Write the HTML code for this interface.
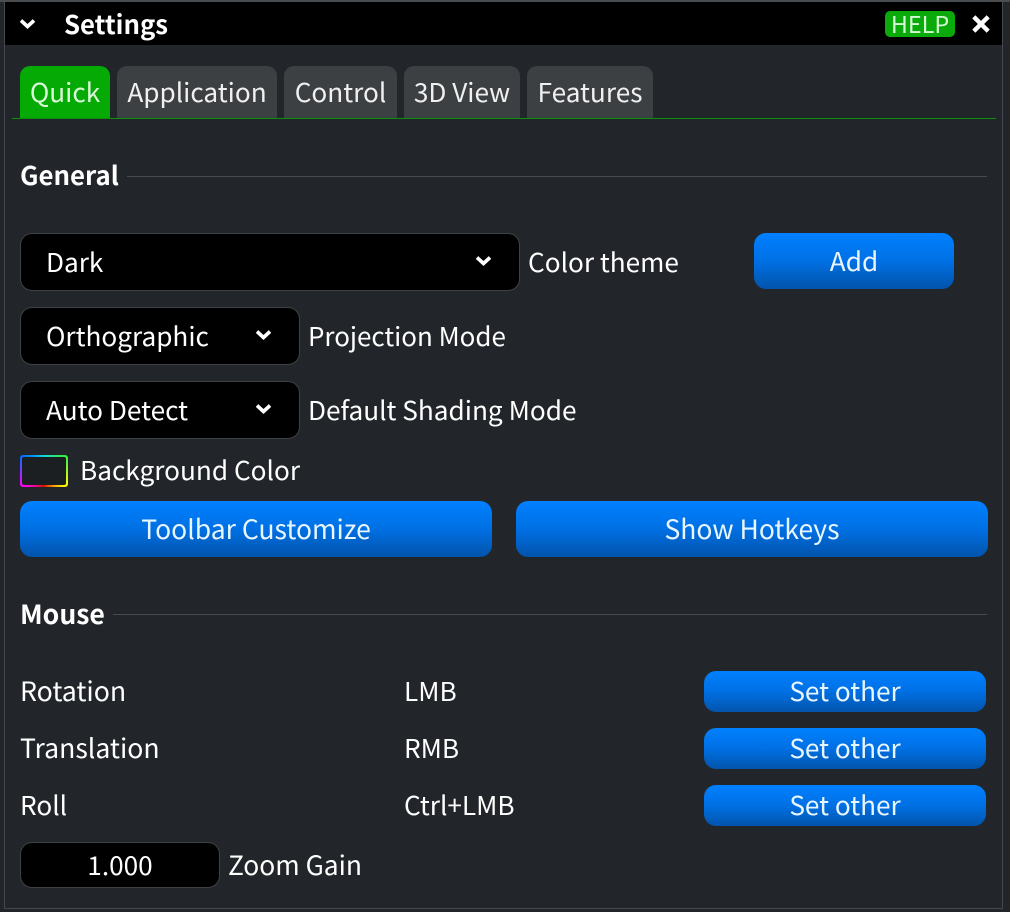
<!DOCTYPE html>
<html><head><meta charset="utf-8">
<style>
html,body{margin:0;padding:0;background:#22262a}
body{width:1010px;height:912px;position:relative;overflow:hidden;font-family:"Noto Sans CJK JP","Noto Sans CJK SC","Liberation Sans",sans-serif;color:#fff;font-size:26.2px}
.a,.t{position:absolute}
.t{white-space:nowrap;line-height:40px;height:40px;margin-top:-1px}
.b{font-weight:700;font-size:26px;margin-top:0}
.tab{position:absolute;top:66px;height:52px;background:#3d4043;border-radius:10px 10px 0 0;text-align:center;line-height:50px;color:#f0f0f0}
.sel{position:absolute;background:#000;border:1px solid #3e4145;border-radius:12px;box-sizing:border-box}
.btn{position:absolute;background:linear-gradient(#0080ff 0%,#0070e4 50%,#0254ab 100%);border-radius:12px;text-align:center;color:#e8f6ff}
.hr{position:absolute;height:1px;background:#474a50}
svg{position:absolute;overflow:visible}
</style></head><body>
<div class="a" style="left:0;top:0;width:1010px;height:2px;background:#4a4d50"></div>
<div class="a" style="left:4px;top:2px;width:1px;height:906px;background:#45484c"></div>
<div class="a" style="left:1002px;top:2px;width:1px;height:906px;background:#45484c"></div>
<div class="a" style="left:4px;top:908px;width:999px;height:1px;background:#45484c"></div>
<div class="a" style="left:5px;top:2px;width:997px;height:43px;background:#000"></div>
<svg style="left:19px;top:18px" width="17" height="12"><path d="M2 2.5 L8.5 8.5 L15 2.5" fill="none" stroke="#fff" stroke-width="3.6"/></svg>
<div class="t b" style="left:64px;top:4px;font-size:25.7px">Settings</div>
<div class="a" style="left:885px;top:11px;width:70px;height:26px;background:#0aaa0a;border-radius:5px;text-align:center;line-height:25px;font-size:23.4px;color:#d4f8d4">HELP</div>
<svg style="left:971px;top:14px" width="20" height="20"><path d="M2.8 2.8 L17.2 17.2 M17.2 2.8 L2.8 17.2" fill="none" stroke="#fff" stroke-width="4.4"/></svg>

<div class="tab" style="left:20px;width:90px;background:#05aa05;color:#d8f8d8">Quick</div>
<div class="tab" style="left:117px;width:160px">Application</div>
<div class="tab" style="left:284px;width:113px">Control</div>
<div class="tab" style="left:404px;width:116px">3D View</div>
<div class="tab" style="left:527px;width:126px">Features</div>
<div class="a" style="left:12px;top:118px;width:984px;height:1px;background:#0d8f0d"></div>

<div class="t b" style="left:20px;top:155px;font-size:25.8px">General</div>
<div class="hr" style="left:127px;top:176px;width:860px"></div>

<div class="sel" style="left:20px;top:233px;width:500px;height:58px"></div>
<div class="t" style="left:46px;top:242px">Dark</div>
<svg style="left:475px;top:255px" width="17" height="12"><path d="M2 2.5 L8.5 8.5 L15 2.5" fill="none" stroke="#fff" stroke-width="3.6"/></svg>
<div class="t" style="left:528px;top:242px">Color theme</div>
<div class="btn" style="left:754px;top:233px;width:200px;height:56px;line-height:54px">Add</div>

<div class="sel" style="left:20px;top:307px;width:280px;height:58px"></div>
<div class="t" style="left:46px;top:316px">Orthographic</div>
<svg style="left:255px;top:329px" width="17" height="12"><path d="M2 2.5 L8.5 8.5 L15 2.5" fill="none" stroke="#fff" stroke-width="3.6"/></svg>
<div class="t" style="left:308px;top:317px;font-size:25.95px">Projection Mode</div>

<div class="sel" style="left:20px;top:381px;width:280px;height:58px"></div>
<div class="t" style="left:46px;top:390px">Auto Detect</div>
<svg style="left:255px;top:403px" width="17" height="12"><path d="M2 2.5 L8.5 8.5 L15 2.5" fill="none" stroke="#fff" stroke-width="3.6"/></svg>
<div class="t" style="left:308px;top:390px">Default Shading Mode</div>

<div class="a" style="left:20px;top:455px;width:48px;height:32px;border-radius:3px;background:conic-gradient(#10d8e0 0deg,#30f040 56deg,#ffff00 124deg,#e01000 180deg,#ff00ff 236deg,#0070ff 304deg,#10d8e0 360deg)"></div>
<div class="a" style="left:22px;top:457px;width:44px;height:28px;border-radius:2px;background:#1b1f22"></div>
<div class="t" style="left:80px;top:450px">Background Color</div>

<div class="btn" style="left:20px;top:501px;width:472px;height:56px;line-height:54px;font-size:26.5px">Toolbar Customize</div>
<div class="btn" style="left:516px;top:501px;width:472px;height:56px;line-height:54px;font-size:26.5px">Show Hotkeys</div>

<div class="t b" style="left:20px;top:593px;font-size:26.6px">Mouse</div>
<div class="hr" style="left:113px;top:614px;width:874px"></div>

<div class="t" style="left:20px;top:671px;font-size:26.7px">Rotation</div>
<div class="t" style="left:404px;top:671px">LMB</div>
<div class="btn" style="left:704px;top:671px;width:282px;height:41px;line-height:39px">Set other</div>

<div class="t" style="left:20px;top:728px;font-size:26.6px">Translation</div>
<div class="t" style="left:404px;top:728px">RMB</div>
<div class="btn" style="left:704px;top:728px;width:282px;height:41px;line-height:39px">Set other</div>

<div class="t" style="left:20px;top:785px">Roll</div>
<div class="t" style="left:404px;top:785px">Ctrl+LMB</div>
<div class="btn" style="left:704px;top:785px;width:282px;height:41px;line-height:39px">Set other</div>

<div class="sel" style="left:20px;top:842px;width:200px;height:46px;text-align:center;line-height:42px">1.000</div>
<div class="t" style="left:228px;top:845px;font-size:26.4px">Zoom Gain</div>
</body></html>
